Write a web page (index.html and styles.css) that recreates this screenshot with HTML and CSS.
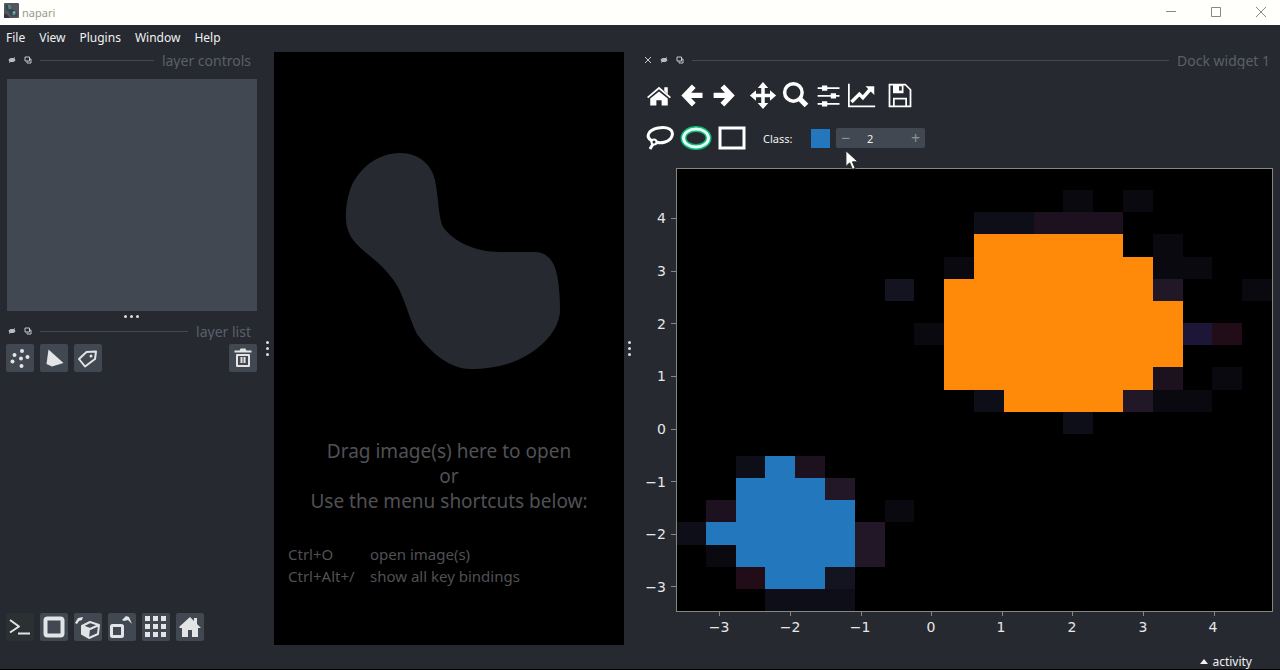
FILE: index.html
```html
<!DOCTYPE html>
<html lang="en">
<head>
<meta charset="utf-8">
<title>napari</title>
<link rel="stylesheet" href="styles.css">
</head>
<body>
<div class="window">
  <header class="titlebar">
    <svg class="logo" viewBox="0 0 16 16" aria-hidden="true"><rect width="16" height="16" rx="1" fill="#55555f"/><path d="M2 2h4l2 4 5 3 1 5H8l-3-5-3-2z" fill="#2f4a4c"/><path d="M4 2h3l1 4-3 1zM9 9h3v4H9z" fill="#5f8186"/><path d="M10 9h2v2h-2z" fill="#9fc0bb"/><path d="M0 11l4 2 2 3H0z" fill="#3a3048"/></svg>
    <span class="app-name">napari</span>
    <div class="window-buttons">
      <button type="button" aria-label="Minimize"><svg viewBox="0 0 12 12"><path d="M1 5.500h10"/></svg></button>
      <button type="button" aria-label="Maximize"><svg viewBox="0 0 12 12"><path d="M1.500 1.500h9v9h-9z"/></svg></button>
      <button type="button" aria-label="Close"><svg viewBox="0 0 12 12"><path d="M1 1l10 10M11 1L1 11"/></svg></button>
    </div>
  </header>

  <nav class="menubar">
    <button type="button">File</button>
    <button type="button">View</button>
    <button type="button">Plugins</button>
    <button type="button">Window</button>
    <button type="button">Help</button>
  </nav>

  <main class="workspace">
    <aside class="sidebar">
      <div class="dock-title">
        <button type="button" class="dock-button" aria-label="Hide layer controls"><svg viewBox="0 0 8 8"><ellipse cx="4" cy="4" rx="3" ry="1.500"/><path d="M1 6.500L7 1.500"/></svg></button>
        <button type="button" class="dock-button" aria-label="Float layer controls"><svg viewBox="0 0 8 8"><path class="line" d="M1 1h4.500v4H1zM3 5.500v1.500h4V3H6"/></svg></button>
        <span class="dock-rule"></span>
        <h2>layer controls</h2>
      </div>
      <section class="controls-box" aria-label="layer controls"></section>
      <div class="grip grip-row"><i></i><i></i><i></i></div>
      <div class="dock-title">
        <button type="button" class="dock-button" aria-label="Hide layer list"><svg viewBox="0 0 8 8"><ellipse cx="4" cy="4" rx="3" ry="1.500"/><path d="M1 6.500L7 1.500"/></svg></button>
        <button type="button" class="dock-button" aria-label="Float layer list"><svg viewBox="0 0 8 8"><path class="line" d="M1 1h4.500v4H1zM3 5.500v1.500h4V3H6"/></svg></button>
        <span class="dock-rule"></span>
        <h2>layer list</h2>
      </div>
      <div class="button-row">
        <button type="button" class="tile" aria-label="New points layer"><svg viewBox="0 0 28 28"><g class="solid"><circle cx="16" cy="7" r="2"/><circle cx="8.500" cy="11" r="2"/><circle cx="21.500" cy="13" r="2"/><circle cx="15" cy="14.500" r="2"/><circle cx="6.500" cy="17.500" r="2"/><circle cx="15.500" cy="22" r="2"/></g></svg></button>
        <button type="button" class="tile" aria-label="New shapes layer"><svg viewBox="0 0 28 28"><path class="solid" d="M8.500 5.500L23.500 19 12 22.500 6.500 20z"/></svg></button>
        <button type="button" class="tile" aria-label="New labels layer"><svg viewBox="0 0 28 28"><path class="line" d="M5 15L12.500 8 22 7.500 21 15 11 22.500z"/><circle class="solid" cx="17" cy="12" r="1.500"/></svg></button>
        <button type="button" class="tile tile-end" aria-label="Delete layer"><svg viewBox="0 0 28 28"><path class="line" d="M5.500 7.500h17M8 11v11h12V11zM12.500 13v6M15.500 13v6"/><path class="solid" d="M10.500 7l1-2.500h5l1 2.500z"/></svg></button>
      </div>
      <div class="button-row viewer-buttons">
        <button type="button" class="tile tile-dark" aria-label="Console"><svg viewBox="0 0 28 28"><path class="line" d="M4 7l9 6.500L4 19.500M12 20.500h12"/></svg></button>
        <button type="button" class="tile" aria-label="Toggle 2D 3D"><svg viewBox="0 0 28 28"><rect class="heavy" x="5.500" y="5.500" width="17" height="17" rx="2"/></svg></button>
        <button type="button" class="tile" aria-label="Roll dimensions"><svg viewBox="0 0 28 28"><path class="line" d="M8 13l8-4 9 3-1 9-9 4-7-4zM8 13l8 3 9-4"/><path class="solid" d="M8 13l8 3-1 9-7-4zM1 10l3-5 5-1-1 3-3 1-2 3z"/></svg></button>
        <button type="button" class="tile" aria-label="Transpose dimensions"><svg viewBox="0 0 28 28"><rect class="frame" x="3.500" y="12.500" width="11" height="11" rx="1"/><path class="solid" d="M14 7l4-4 3 1 3 7-4-4-4 1z"/></svg></button>
        <button type="button" class="tile" aria-label="Grid mode"><svg viewBox="0 0 28 28"><path class="solid" d="M3 3h5v5H3zM11 3h5v5h-5zM19 3h5v5h-5zM3 11h5v5H3zM11 11h5v5h-5zM19 11h5v5h-5zM3 19h5v5H3zM11 19h5v5h-5zM19 19h5v5h-5z"/></svg></button>
        <button type="button" class="tile" aria-label="Reset view"><svg viewBox="0 0 28 28"><path class="solid" d="M14 4L3 14l1 1h2v9h6v-7h4v7h6v-9h3l-4-4V5h-3v3z"/></svg></button>
      </div>
    </aside>

    <div class="grip grip-column"><i></i><i></i><i></i></div>

    <section class="canvas">
      <svg class="blob" viewBox="345 153 216 216" aria-hidden="true"><path d="M400 153C420 153 432 166 435 180C439 200 438 216 443 227C453 241 474 252 500 252H533C545 251 554 259 557 275C560 290 560 305 560 312C558 335 535 352 520 359C505 366 488 369 470 369C450 369 430 352 417 334C408 316 403 290 391 277C377 258 358 250 350 235C343 222 346 203 350 190C358 168 378 153 400 153Z"/></svg>
      <p class="welcome">Drag image(s) here to open<br>or<br>Use the menu shortcuts below:</p>
      <dl class="shortcuts">
        <dt>Ctrl+O</dt><dd>open image(s)</dd>
        <dt>Ctrl+Alt+/</dt><dd>show all key bindings</dd>
      </dl>
    </section>

    <div class="grip grip-column"><i></i><i></i><i></i></div>

    <section class="plot-dock">
      <div class="dock-title">
        <button type="button" class="dock-button" aria-label="Close dock"><svg viewBox="0 0 8 8"><path d="M1 1l6 6M7 1L1 7"/></svg></button>
        <button type="button" class="dock-button" aria-label="Hide dock"><svg viewBox="0 0 8 8"><ellipse cx="4" cy="4" rx="3" ry="1.500"/><path d="M1 6.500L7 1.500"/></svg></button>
        <button type="button" class="dock-button" aria-label="Float dock"><svg viewBox="0 0 8 8"><path class="line" d="M1 1h4.500v4H1zM3 5.500v1.500h4V3H6"/></svg></button>
        <span class="dock-rule"></span>
        <h2>Dock widget 1</h2>
      </div>
      <div class="toolbar">
        <button type="button" aria-label="Home"><svg viewBox="0 0 32 32"><path class="fill" d="M16 12l10 8v8h-7v-6h-6v6H6v-8zM22 7h4v8l-4-4z"/><path class="thin" d="M3 19L16 8l13 11"/></svg></button>
        <button type="button" aria-label="Back"><svg viewBox="0 0 32 32"><path class="bold" d="M18 6L8 16.500 18 27M8 16.500h20"/></svg></button>
        <button type="button" aria-label="Forward"><svg viewBox="0 0 32 32"><path class="bold" d="M13 6l10 10.500L13 27M23 16.500H3"/></svg></button>
        <button type="button" class="group-start" aria-label="Pan"><svg viewBox="0 0 32 32"><path class="mid" d="M16 6v20M6 16.500h20"/><path class="fill" d="M16 1l6 7H10zM16 32l6-7H10zM1 16.500l7-6v12zM31 16.500l-7-6v12z"/></svg></button>
        <button type="button" aria-label="Zoom"><svg viewBox="0 0 32 32"><circle class="mid" cx="13" cy="13" r="10"/><path class="bold" d="M20 20l8 8"/></svg></button>
        <button type="button" aria-label="Configure subplots"><svg viewBox="0 0 32 32"><path class="thin" d="M3 8h25M3 17h25M3 26h25"/><path class="fill" d="M8 5h6v6H8zM18 14h6v6h-6zM8 23h6v6H8z"/></svg></button>
        <button type="button" aria-label="Edit axes"><svg viewBox="0 0 32 32"><path class="thin" d="M1 3v26h30"/><path class="mid" d="M4 24l9-9 4 4 8-9"/><path class="fill" d="M20 6h10v10z"/></svg></button>
        <button type="button" class="group-start" aria-label="Save"><svg viewBox="0 0 32 32"><path class="thin" d="M4 4h18l6 6v19H4zM9 28v-8h14v8"/><path class="fill" d="M8 4h12v10H8z"/><path class="gap" d="M15 6h3v5h-3z"/></svg></button>
      </div>
      <div class="toolbar select-bar">
        <button type="button" aria-label="Lasso"><svg viewBox="0 0 32 32"><path class="outline" d="M8 19C1 15 4 8 14 6s16 2 14 8-11 8-16 6"/><circle class="thin" cx="10" cy="20" r="2.500"/><path class="outline" d="M9 22l-3 5"/></svg></button>
        <button type="button" class="active" aria-label="Ellipse"><svg viewBox="0 0 32 32"><ellipse class="glow" cx="16" cy="16" rx="12.500" ry="9"/><ellipse class="ring" cx="16" cy="16" rx="12.500" ry="9"/></svg></button>
        <button type="button" aria-label="Rectangle"><svg viewBox="0 0 32 32"><path class="outline" d="M4 6h24v20H4z"/></svg></button>
        <label for="class-id">Class:</label>
        <span class="swatch"></span>
        <div class="spinner">
          <button type="button" aria-label="Decrease">&minus;</button>
          <input id="class-id" type="text" value="2">
          <button type="button" aria-label="Increase">+</button>
        </div>
        <svg class="cursor" viewBox="0 0 14 22" aria-hidden="true"><path d="M1 1v17l4-4 3 7 3-1-3-7h6z"/></svg>
      </div>
      <svg class="plot" viewBox="638 160 642 484" role="img" aria-label="Selection histogram">
        <rect class="plot-area" x="676" y="168" width="596" height="443"/>
        <g transform="translate(676 168) scale(29.800 22.150)" shape-rendering="crispEdges">
          <path fill="#09090f" d="M13 1h1v1h-1zM15 1h1v1h-1zM16 3h1v2h-1zM17 4h1v1h-1zM9 4h1v1H9zM19 5h1v1h-1zM8 7h1v1H8zM18 9h1v1h-1zM16 10h2v1h-2zM7 15h1v1H7zM1 17h1v1H1z"/>
          <path fill="#0e0e18" d="M10 2h2v1h-2zM10 10h1v1h-1zM13 11h1v1h-1zM2 13h1v1H2zM0 16h1v1H0zM3 19h3v1H3z"/>
          <path fill="#141421" d="M7 5h1v1H7zM5 18h1v1H5z"/>
          <path fill="#1d1120" d="M12 2h3v1h-3zM16 9h1v1h-1zM4 13h1v1H4zM1 15h1v1H1z"/>
          <path fill="#221727" d="M16 5h1v1h-1zM15 10h1v1h-1zM5 14h1v1H5zM6 16h1v2H6z"/>
          <path fill="#220c18" d="M18 7h1v1h-1zM2 18h1v1H2z"/>
          <path fill="#1d1636" d="M17 7h1v1h-1z"/>
          <path fill="#ff8a0a" d="M10 3H15V4H16V6H17V9H16V10H15V11H11V10H9V5H10Z"/>
          <path fill="#2378bd" d="M3 13H4V14H5V15H6V18H5V19H3V18H2V17H1V16H2V14H3Z"/>
        </g>
        <path class="axis" shape-rendering="crispEdges" d="M676 168h596v443H676zM671 218h5M671 271h5M671 323h5M671 376h5M671 429h5M671 481h5M671 534h5M671 586h5M719 611v5M790 611v5M861 611v5M931 611v5M1002 611v5M1072 611v5M1143 611v5M1214 611v5"/>
        <g class="ticks ticks-y">
          <text x="666" y="223">4</text><text x="666" y="276">3</text><text x="666" y="329">2</text><text x="666" y="381">1</text><text x="666" y="434">0</text><text x="666" y="487">−1</text><text x="666" y="539">−2</text><text x="666" y="592">−3</text>
        </g>
        <g class="ticks ticks-x">
          <text x="719" y="632">−3</text><text x="790" y="632">−2</text><text x="860" y="632">−1</text><text x="931" y="632">0</text><text x="1001" y="632">1</text><text x="1072" y="632">2</text><text x="1143" y="632">3</text><text x="1213" y="632">4</text>
        </g>
      </svg>
    </section>
  </main>

  <footer class="statusbar">
    <button type="button"><svg viewBox="0 0 8 5" aria-hidden="true"><path d="M0 5L4 0l4 5z"/></svg>activity</button>
  </footer>
</div>
</body>
</html>
```

FILE: styles.css
```css
* {
  box-sizing: border-box;
}

body {
  margin: 0;
  background: #262930;
  color: #f0f1f2;
  font-family: "Noto Sans", "Open Sans", sans-serif;
  font-size: 12px;
}

button {
  padding: 0;
  border: 0;
  background: none;
  color: inherit;
  font: inherit;
}

.window {
  display: flex;
  flex-direction: column;
  min-height: 100vh;
  border-bottom: 1px solid #000;
}

.titlebar {
  display: flex;
  align-items: center;
  height: 25px;
  padding-left: 4px;
  background: #fffffb;
  color: #99998f;
}

.app-name {
  font-size: 11px;
}

.logo {
  width: 15px;
  height: 15px;
  margin: 0 3px 4px 0;
}

.window-buttons {
  display: flex;
  margin-left: auto;
}

.window-buttons button {
  display: grid;
  place-items: center;
  width: 45px;
  height: 25px;
  padding: 0 0 2px 6px;
}

.window-buttons svg {
  width: 12px;
  height: 12px;
  fill: none;
  stroke: #88888a;
}

.menubar {
  display: flex;
  gap: 14px;
  height: 26px;
  padding: 0 0 2px 6px;
}

.workspace {
  display: grid;
  grid-template-columns: 264px 10px minmax(0, 350fr) 14px minmax(0, 642fr);
  flex: 1;
}

.sidebar {
  display: flex;
  flex-direction: column;
  padding: 0 7px 4px 6px;
}

.dock-title {
  display: flex;
  align-items: center;
  gap: 8px;
  height: 18px;
  padding: 0 6px 0 2px;
}

.dock-title h2 {
  height: 18px;
  margin: 0;
  overflow: hidden;
  color: #5b6068;
  font-size: 14px;
  font-weight: 400;
  line-height: 20px;
  white-space: nowrap;
}

.dock-button {
  width: 8px;
  height: 8px;
}

.dock-button svg {
  display: block;
  width: 8px;
  height: 8px;
  fill: #a8abb0;
  stroke: #c6c8cb;
}

.dock-button .line {
  fill: none;
}

.dock-rule {
  flex: 1;
  height: 1px;
  background: #464a4c;
}

.controls-box {
  height: 232px;
  margin: 10px 0 0 1px;
  background: #414851;
}

.grip {
  display: flex;
  align-items: center;
  justify-content: center;
  gap: 3px;
}

.grip i {
  width: 3px;
  height: 3px;
  border-radius: 2px;
  background: #dcdee0;
}

.grip-row {
  height: 11px;
}

.grip-column {
  flex-direction: column;
  gap: 3px;
  padding-right: 3px;
}

.button-row {
  display: flex;
  gap: 6px;
  margin-top: 4px;
}

.viewer-buttons {
  margin-top: auto;
}

.tile {
  width: 28px;
  height: 28px;
  border-radius: 2px;
  background: #414851;
}

.tile-dark {
  background: #2b3033;
}

.tile-end {
  margin-left: auto;
}

.tile svg {
  display: block;
  width: 28px;
  height: 28px;
}

.tile .solid {
  fill: #e2e4e6;
}

.tile .line,
.tile .frame,
.tile .heavy {
  fill: none;
  stroke: #e2e4e6;
  stroke-linejoin: round;
  stroke-width: 2;
}

.tile .frame {
  stroke-width: 3;
}

.tile .heavy {
  stroke-width: 4;
}

.canvas {
  margin-top: 1px;
  padding: 101px 14px 0;
  background: #000;
  color: #505155;
}

.blob {
  display: block;
  width: 216px;
  margin: 0 auto 70px 57px;
  fill: #262930;
}

.welcome {
  margin: 0 0 29px;
  font-size: 19px;
  line-height: 25px;
  text-align: center;
  white-space: nowrap;
}

.shortcuts {
  display: grid;
  grid-template-columns: 82px 1fr;
  margin: 0;
  font-size: 15px;
  line-height: 22px;
  white-space: nowrap;
}

.shortcuts dd {
  margin: 0;
}

.plot-dock {
  display: flex;
  flex-direction: column;
}

.plot-dock .dock-title {
  padding: 0 10px 0 6px;
}

.toolbar {
  display: flex;
  align-items: center;
  height: 42px;
  margin-top: 5px;
  padding-left: 4px;
}

.toolbar > button {
  display: grid;
  place-items: center;
  width: 33px;
  height: 33px;
}

.toolbar > .group-start {
  margin-left: 5px;
}

.toolbar > button svg {
  width: 28px;
  height: 28px;
  fill: none;
  stroke: #fff;
}

.toolbar .fill {
  fill: #fff;
  stroke: none;
}

.toolbar .gap {
  fill: #262930;
  stroke: none;
}

.toolbar .thin {
  stroke-width: 2;
}

.toolbar .mid {
  stroke-width: 4;
}

.toolbar .bold {
  stroke-width: 6;
}

.toolbar .outline {
  stroke-width: 3;
}

.toolbar .glow {
  stroke: #10b878;
  stroke-width: 6;
}

.toolbar .ring {
  stroke: #e4fff4;
  stroke-width: 3;
}

.select-bar {
  position: relative;
  margin: 1px 0;
}

.select-bar > button {
  width: 36px;
}

.select-bar > button svg {
  width: 32px;
  height: 32px;
}

.select-bar label {
  margin-left: 13px;
  width: 48px;
  font-size: 11px;
}

.swatch {
  width: 19px;
  height: 19px;
  margin-right: 6px;
  background: #2378bd;
}

.spinner {
  display: flex;
  width: 89px;
  height: 20px;
  border-radius: 2px;
  background: #414851;
}

.spinner button {
  width: 19px;
  color: #8d9299;
  font-size: 16px;
  line-height: 20px;
}

.spinner input {
  flex: 1;
  min-width: 0;
  padding: 0 0 0 12px;
  border: 0;
  background: none;
  color: #f0f1f2;
  font: inherit;
  font-size: 11px;
}

.cursor {
  position: absolute;
  left: 207px;
  top: 32px;
  width: 13px;
  height: 22px;
  fill: #fff;
  stroke: #222;
}

.plot {
  display: block;
  width: 100%;
}

.plot-area {
  fill: #000;
}

.axis {
  fill: none;
  stroke: #85867c;
}

.ticks {
  fill: #e6e7e9;
  font-family: "DejaVu Sans", sans-serif;
  font-size: 14px;
}

.ticks-y {
  text-anchor: end;
}

.ticks-x {
  text-anchor: middle;
}

.statusbar {
  display: flex;
  justify-content: flex-end;
  height: 24px;
  padding: 9px 28px 0 0;
}

.statusbar button {
  display: flex;
  align-items: center;
  gap: 4px;
  height: 15px;
}

.statusbar svg {
  width: 8px;
  height: 5px;
  fill: #f0f1f2;
}
```
